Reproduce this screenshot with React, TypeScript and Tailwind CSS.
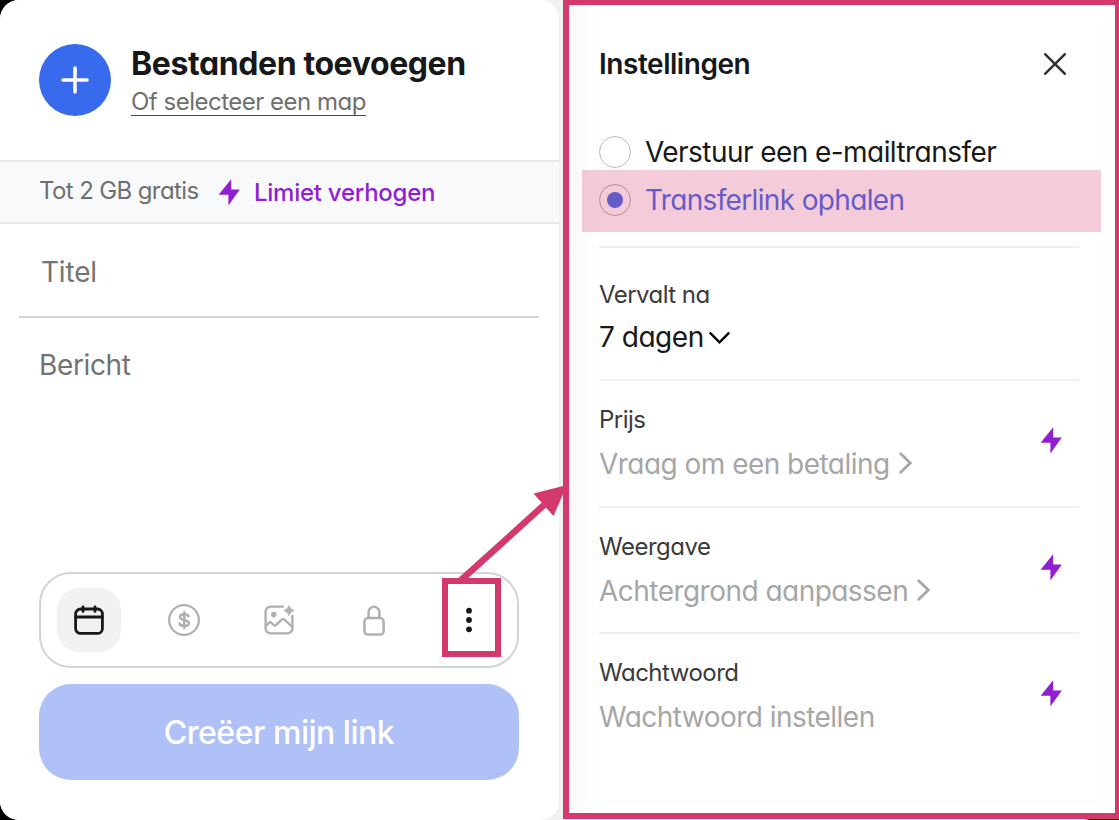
import type { ReactNode } from "react";

type Section = { label: string; value: string; height: string; chevron?: boolean };

const SECTIONS: Section[] = [
  { label: "Prijs", value: "Vraag om een betaling", height: "h-[127px]", chevron: true },
  { label: "Weergave", value: "Achtergrond aanpassen", height: "h-[126px]", chevron: true },
  { label: "Wachtwoord", value: "Wachtwoord instellen", height: "h-[127px]" },
];

function Bolt() {
  return (
    <svg width="22" height="27" viewBox="0 0 22 27" fill="#8f1fd1" className="shrink-0">
      <path d="M13.2.2.6 15.8h9.8v10.600L21.800 10.500h-8.600Z" />
    </svg>
  );
}

function CalendarIcon() {
  return (
    <svg width="32" height="32" viewBox="0 0 32 32" fill="none" stroke="#17181a" strokeWidth="2.8">
      <rect x="2.6" y="5" width="26.8" height="24.4" rx="5" />
      <path d="M2.6 13h26.8M10 2.8v4.6M22 2.8v4.6" strokeLinecap="round" />
    </svg>
  );
}

function DollarIcon() {
  return (
    <svg width="32" height="32" viewBox="0 0 32 32" fill="none" stroke="#b0b0b0" strokeWidth="2.2" strokeLinecap="round">
      <circle cx="16" cy="16" r="14.9" />
      <path
        d="M20.4 12.2c-.5-1.3-2-2-4.3-2-2.5 0-4.2 1-4.2 2.8 0 4.1 9 1.8 9 6 0 1.9-1.8 2.9-4.6 2.9-2.6 0-4.3-.8-4.8-2.4M16.3 8v16"
        strokeWidth="2.6"
      />
    </svg>
  );
}

function ImageIcon() {
  return (
    <svg width="32" height="32" viewBox="0 0 32 32" fill="none" stroke="#b0b0b0" strokeWidth="2.4" strokeLinejoin="round">
      <path d="M20 2.6H7.6a5 5 0 0 0-5 5v16.8a5 5 0 0 0 5 5h16.8a5 5 0 0 0 5-5V12" strokeLinecap="round" />
      <path d="m2.6 22 3.6-3.2q1.2-1 2.4.2l2.2 2.2q1.1 1 2.2-.2l6-5.6q1.1-1 2.2 0l8.2 7.4" />
      <circle cx="10.8" cy="10.6" r="2.8" fill="#b0b0b0" stroke="none" />
      <path d="M26 1.6q1.2 3.8 5 5-3.8 1.2-5 5-1.2-3.8-5-5 3.8-1.2 5-5Z" fill="#b0b0b0" strokeWidth="0.8" />
    </svg>
  );
}

function LockIcon() {
  return (
    <svg width="32" height="32" viewBox="0 0 32 32" fill="none" stroke="#b0b0b0" strokeWidth="2.5">
      <rect x="6.4" y="14" width="19.2" height="16.6" rx="3.5" />
      <path d="M10.6 14V8.2a5.4 5.4 0 0 1 10.8 0V14" />
    </svg>
  );
}

function DotsIcon() {
  return (
    <svg width="32" height="32" viewBox="0 0 32 32" fill="#17181a">
      <circle cx="16" cy="6.7" r="2.9" />
      <circle cx="16" cy="16" r="2.9" />
      <circle cx="16" cy="25.3" r="2.9" />
    </svg>
  );
}

function ToolButton({ active, children }: { active?: boolean; children: ReactNode }) {
  return (
    <button
      type="button"
      className={`flex size-16 items-center justify-center rounded-[22px] ${active ? "bg-[#f1f1f1]" : ""}`}
    >
      {children}
    </button>
  );
}

function TransferPanel() {
  return (
    <section className="flex h-[820px] w-[559px] shrink-0 flex-col rounded-[19px] bg-white">
      <div className="flex h-[160px] items-start gap-5 px-[39px] pt-11">
        <div className="flex size-[72px] items-center justify-center rounded-full bg-[#376aec]">
          <svg width="28" height="28" viewBox="0 0 28 28" stroke="#fff" strokeWidth="3.6" strokeLinecap="round">
            <path d="M14 2v24M2 14h24" />
          </svg>
        </div>
        <div className="flex flex-col items-start">
          <h1 className="text-[32px] leading-10 font-bold tracking-[-0.4px] whitespace-nowrap text-[#17181a]">
            Bestanden toevoegen
          </h1>
          <span className="mt-1 h-7 border-b border-[#4a4a4a] text-2xl leading-7 tracking-[-0.5px] whitespace-nowrap text-[#6f6f6f]">
            Of selecteer een map
          </span>
        </div>
      </div>

      <div className="flex h-16 items-center border-y-2 border-[#e8eaed] bg-[#f8f9fb] px-[39px] text-2xl">
        <span className="w-[179px] pb-0.5 tracking-[-0.62px] whitespace-nowrap text-[#6f6f6f]">Tot 2 GB gratis</span>
        <Bolt />
        <span className="ml-[14px] pt-px font-medium tracking-[-0.26px] whitespace-nowrap text-[#8f1fd1]">
          Limiet verhogen
        </span>
      </div>

      <div className="mr-5 ml-[19px] flex h-[94px] items-center border-b-2 border-[#d4d4d4] pt-[3px] pl-[22px] text-[28px] tracking-[-0.2px] text-[#737373]">
        Titel
      </div>
      <div className="flex-1 px-[39px] pt-[29px] text-[28px] leading-[37px] tracking-[-0.38px] text-[#737373]">Bericht</div>

      <div className="mr-10 ml-[39px] flex h-24 items-center justify-between rounded-[32px] border-2 border-[#d4d4d4] px-4">
        <ToolButton active>
          <CalendarIcon />
        </ToolButton>
        <ToolButton>
          <DollarIcon />
        </ToolButton>
        <ToolButton>
          <ImageIcon />
        </ToolButton>
        <ToolButton>
          <LockIcon />
        </ToolButton>
        <ToolButton>
          <DotsIcon />
        </ToolButton>
      </div>
      <button
        type="button"
        className="mt-4 mr-10 mb-10 ml-[39px] h-24 shrink-0 rounded-[32px] bg-[#afc1f7] pt-0.5 text-[32px] font-medium tracking-[-0.48px] text-white"
      >
        Creëer mijn link
      </button>
    </section>
  );
}

function SettingsPanel() {
  return (
    <section className="mb-px flex flex-1 flex-col border-t-[5px] border-r-4 border-b-[6px] border-l-[6px] border-[#d3396c] bg-linear-to-r from-[#f8f8f8] to-white to-[28px] pr-9 pl-[30px]">
      <header className="flex h-[117px] items-center justify-between pr-[13px]">
        <h2 className="text-[28px] font-semibold tracking-[-0.46px] text-[#17181a]">Instellingen</h2>
        <svg width="22" height="22" viewBox="0 0 22 22" stroke="#333" strokeWidth="2.6" strokeLinecap="round">
          <path d="m1.3 1.3 19.4 19.4m0-19.4L1.3 20.7" />
        </svg>
      </header>

      <div className="flex h-[124px] flex-col pt-1.5 text-[28px] text-[#17181a]">
        <label className="flex h-12 items-center gap-[14px]">
          <span className="size-8 rounded-full border-[1.5px] border-[#bdbdbd] bg-white" />
          <span className="tracking-[-0.56px] whitespace-nowrap">Verstuur een e-mailtransfer</span>
        </label>
        <label className="relative flex h-12 items-center gap-[14px]">
          <span className="flex size-8 items-center justify-center rounded-full border-[1.5px] border-[#a9a9b8] bg-white">
            <span className="size-4 rounded-full bg-[#3f68e8]" />
          </span>
          <span className="tracking-[-0.66px] whitespace-nowrap text-[#3f68e8]">Transferlink ophalen</span>
          {/* translucent marker over the selected option */}
          <span className="absolute -top-[6px] -left-[17px] h-[62px] w-[519px] bg-[#d3396c]/26" />
        </label>
      </div>

      <div className="h-[133px] border-t-2 border-[#efefef] pt-[31px]">
        <p className="text-2xl leading-8 tracking-[-0.55px] text-[#3a3a3a]">Vervalt na</p>
        <p className="mt-2 flex items-center gap-[5px] text-[28px] leading-[37px] tracking-[-0.48px] text-[#17181a]">
          <span className="whitespace-nowrap">7 dagen</span>
          <svg width="21" height="14" viewBox="0 0 21 14" fill="none" stroke="#000" strokeWidth="2.4">
            <path d="m.8 1.5 9.7 9.8 9.7-9.8" />
          </svg>
        </p>
      </div>

      {SECTIONS.map((s) => (
        <div key={s.label} className={`flex justify-between border-t-2 border-[#efefef] pt-[23px] pr-[17px] ${s.height}`}>
          <div>
            <p className="text-2xl leading-8 tracking-[-0.5px] text-[#3a3a3a]">{s.label}</p>
            <p className="mt-[10px] flex items-center gap-[9px] text-[28px] leading-[37px] tracking-[-0.53px] text-[#a6a6a6]">
              <span className="whitespace-nowrap">{s.value}</span>
              {s.chevron && (
                <svg
                  width="14"
                  height="22"
                  viewBox="0 0 14 22"
                  fill="none"
                  stroke="#a6a6a6"
                  strokeWidth="2.8"
                  strokeLinecap="round"
                  className="mb-[3px]"
                >
                  <path d="m1.7 1.7 9.6 9.3-9.6 9.3" />
                </svg>
              )}
            </p>
          </div>
          <div className="pt-[23px]">
            <Bolt />
          </div>
        </div>
      ))}
    </section>
  );
}

export default function App() {
  return (
    <main className="relative h-[820px] w-[1119px] overflow-hidden bg-black font-[Inter,sans-serif] [font-feature-settings:'cv11']">
      <div className="mr-4 h-[820px] rounded-[19px] bg-[#f0f1f2]">
        <div className="flex h-[820px] w-[1119px]">
          <TransferPanel />
          <div className="w-1 shrink-0" />
          <SettingsPanel />
        </div>
      </div>

      {/* callout from the options button to the settings panel */}
      <div className="absolute top-[578px] left-[442px] h-[79px] w-[59px] border-[6px] border-[#d3396c]" />
      <svg className="absolute top-[480px] left-[450px]" width="120" height="104" viewBox="0 0 120 104">
        <path d="M10 101 94 25" stroke="#d3396c" strokeWidth="6.5" />
        <path d="m117 5-33.5 8.5L103.500 36Z" fill="#d3396c" />
      </svg>
    </main>
  );
}
